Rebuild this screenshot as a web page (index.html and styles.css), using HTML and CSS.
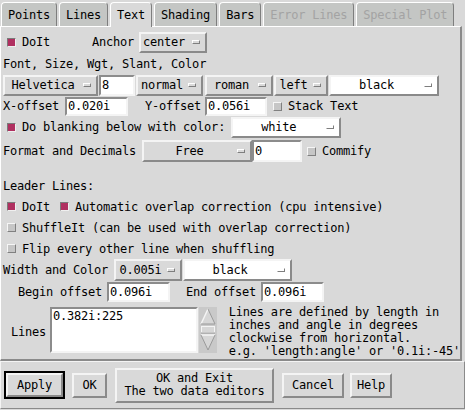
FILE: index.html
```html
<!DOCTYPE html>
<html>
<head>
<meta charset="utf-8">
<link rel="stylesheet" href="styles.css">
</head>
<body>
<div class="tabs">
  <div class="tab">Points</div>
  <div class="tab">Lines</div>
  <div class="tab active">Text</div>
  <div class="tab">Shading</div>
  <div class="tab">Bars</div>
  <div class="tab disabled">Error Lines</div>
  <div class="tab disabled">Special Plot</div>
</div>
<div class="panel">
  <div class="row r24 pl6">
    <span class="cb on"></span><span class="ml6">DoIt</span>
    <span class="ml42">Anchor</span>
    <div class="mb ml5 w68 left"><span class="mbt">center</span><span class="ind"></span></div>
  </div>
  <div class="row r20 pl2">Font, Size, Wgt, Slant, Color</div>
  <div class="row r22 pl2">
    <div class="mb w95"><span class="mbt c">Helvetica</span><span class="ind"></span></div>
    <div class="entry ml1 w36 h21">8</div>
    <div class="mb ml1 w67"><span class="mbt c">normal</span><span class="ind"></span></div>
    <div class="mb ml2 w68"><span class="mbt c">roman</span><span class="ind"></span></div>
    <div class="mb ml1 w54"><span class="mbt c">left</span><span class="ind"></span></div>
    <div class="mb white ml1 w110"><span class="mbt c">black</span><span class="ind"></span></div>
  </div>
  <div class="row r20 pl2">
    <span>X-offset</span>
    <div class="entry ml6 w63">0.020i</div>
    <span class="ml17">Y-offset</span>
    <div class="entry ml4 w62">0.056i</div>
    <span class="cb ml6"></span><span class="ml6">Stack Text</span>
  </div>
  <div class="row r22 pl6">
    <span class="cb on"></span><span class="ml6">Do blanking below with color:</span>
    <div class="mb white ml6 w110"><span class="mbt c">white</span><span class="ind"></span></div>
  </div>
  <div class="row r24 pl2 mt1">
    <span>Format and Decimals</span>
    <div class="mb ml6 w110 h22"><span class="mbt c">Free</span><span class="ind"></span></div>
    <div class="entry w50 h22">0</div>
    <span class="cb ml5"></span><span class="ml6">Commify</span>
  </div>
  <div class="spacer"></div>
  <div class="row r20 pl2">Leader Lines:</div>
  <div class="row r21 pl6">
    <span class="cb on"></span><span class="ml6">DoIt</span>
    <span class="cb on ml10"></span><span class="ml6">Automatic overlap correction (cpu intensive)</span>
  </div>
  <div class="row r21 pl6">
    <span class="cb"></span><span class="ml6">ShuffleIt (can be used with overlap correction)</span>
  </div>
  <div class="row r21 pl6">
    <span class="cb"></span><span class="ml6">Flip every other line when shuffling</span>
  </div>
  <div class="row r22 pl2">
    <span>Width and Color</span>
    <div class="mb ml6 w68 h22"><span class="mbt c">0.005i</span><span class="ind"></span></div>
    <div class="mb white ml1 w109 h22"><span class="mbt c">black</span><span class="ind"></span></div>
  </div>
  <div class="row r21 pl17">
    <span>Begin offset</span>
    <div class="entry ml5 w63 h20">0.096i</div>
    <span class="ml16">End offset</span>
    <div class="entry ml5 w63 h20">0.096i</div>
  </div>
  <div class="lines-row">
    <span class="lines-label">Lines</span>
    <div class="textarea">0.382i:225</div>
    <div class="sbar">
      <svg width="18" height="46" viewBox="0 0 18 46">
        <rect x="0" y="0" width="18" height="46" fill="#c9c9c9"/>
        <polygon points="9,2 16,17 2,17" fill="#d6d6d6"/>
        <polyline points="2,17 9,2" stroke="#f4f4f4" stroke-width="1.5" fill="none"/>
        <polyline points="9,2 16,17 2,17" stroke="#9a9a9a" stroke-width="1" fill="none"/>
        <rect x="2.5" y="19.5" width="13" height="6" fill="#d6d6d6" stroke="#f4f4f4"/>
        <line x1="2" y1="26" x2="16" y2="26" stroke="#9a9a9a"/>
        <polygon points="2,28 16,28 9,43" fill="#d6d6d6"/>
        <polyline points="2,28 16,28" stroke="#f4f4f4" stroke-width="1.5" fill="none"/>
        <polyline points="2,28 9,43 16,28" stroke="#9a9a9a" stroke-width="1" fill="none"/>
      </svg>
    </div>
    <div class="help">Lines are defined by length in<br>inches and angle in degrees<br>clockwise from horizontal.<br>e.g. 'length:angle' or '0.1i:-45'</div>
  </div>
</div>
<div class="bottom">
  <div class="defring"><div class="btn w57 h24">Apply</div></div>
  <div class="btn ml7 w35 h25">OK</div>
  <div class="btn two ml8 w159 h35">OK and Exit<br>The two data editors</div>
  <div class="btn ml8 w62 h25">Cancel</div>
  <div class="btn ml6 w42 h25">Help</div>
</div>
</body>
</html>
```
FILE: styles.css
```css
* { box-sizing: border-box; }
html, body { margin: 0; padding: 0; }
body {
  width: 465px;
  height: 410px;
  overflow: hidden;
  background: #d9d9d9;
  color: #000;
  font-family: "DejaVu Sans Mono", "Liberation Mono", monospace;
  font-size: 12px;
  letter-spacing: -0.22px;
  white-space: nowrap;
}
.tabs {
  height: 26px;
  display: flex;
  align-items: flex-end;
  padding-left: 1px;
  position: relative;
  z-index: 2;
}
.tab {
  height: 24px;
  padding: 0 6px;
  margin-right: 2px;
  background: #c4c6c4;
  border-top: 1px solid #ffffff;
  border-left: 1px solid #ffffff;
  border-right: 1px solid #7e7e7e;
  border-radius: 4px 4px 0 0;
  display: flex;
  align-items: center;
}
.tab.active {
  background: #d9d9d9;
  height: 25px;
  margin-bottom: -1px;
}
.tab.disabled { color: #a3a3a3; }
.panel {
  width: 462px;
  height: 335px;
  border-top: 1px solid #ffffff;
  border-left: 1px solid #ffffff;
  border-right: 2px solid #8a8a8a;
  border-bottom: 2px solid #8a8a8a;
  padding-top: 3px;
}
.row { display: flex; align-items: center; }
.r18 { height: 18px; }
.r20 { height: 20px; }
.r21 { height: 21px; }
.r22 { height: 22px; }
.r24 { height: 24px; }
.mt1 { margin-top: 1px; }
.spacer { height: 13px; }
.pl2 { padding-left: 2px; }
.pl6 { padding-left: 6px; }
.pl17 { padding-left: 17px; }
.ml1 { margin-left: 1px; }
.ml2 { margin-left: 2px; }
.ml4 { margin-left: 4px; }
.ml5 { margin-left: 5px; }
.ml6 { margin-left: 6px; }
.ml7 { margin-left: 7px; }
.ml8 { margin-left: 8px; }
.ml10 { margin-left: 10px; }
.ml16 { margin-left: 16px; }
.ml17 { margin-left: 17px; }
.ml42 { margin-left: 42px; }
.w35 { width: 35px; }
.w36 { width: 36px; }
.w42 { width: 42px; }
.w50 { width: 50px; }
.w54 { width: 54px; }
.w57 { width: 57px; }
.w62 { width: 62px; }
.w63 { width: 63px; }
.w67 { width: 67px; }
.w68 { width: 68px; }
.w95 { width: 95px; }
.w109 { width: 109px; }
.w110 { width: 110px; }
.w159 { width: 159px; }
.h20 { height: 20px !important; }
.h21 { height: 21px !important; }
.h22 { height: 22px !important; }
.h24 { height: 24px; }
.h25 { height: 25px; }
.h35 { height: 35px; }

.cb {
  display: inline-block;
  width: 9px;
  height: 9px;
  flex: none;
  background: #c6c6c6;
  border: 1px solid;
  border-color: #f6f6f6 #808080 #808080 #f6f6f6;
}
.cb.on {
  background: #b03060;
  border-color: #7a7a7a #efefef #efefef #7a7a7a;
}
.mb {
  height: 21px;
  display: flex;
  align-items: center;
  background: #d9d9d9;
  border: 2px solid;
  border-color: #f4f4f4 #8a8a8a #8a8a8a #f4f4f4;
  padding: 0 5px 0 2px;
  flex: none;
}
.mb.white { background: #ffffff; }
.mbt { flex: 1; }
.mbt.c { text-align: center; }
.mb.left .mbt { text-align: left; }
.ind {
  width: 8px;
  height: 4px;
  flex: none;
  border-top: 1px solid #ffffff;
  border-left: 1px solid #ffffff;
  border-right: 1px solid #7e7e7e;
  border-bottom: 1px solid #7e7e7e;
  margin-left: 4px;
}
.entry {
  height: 19px;
  display: flex;
  align-items: center;
  background: #ffffff;
  border: 2px solid;
  border-color: #8c8c8c #f4f4f4 #f4f4f4 #8c8c8c;
  padding-left: 1px;
  flex: none;
}
.lines-row {
  display: flex;
  align-items: flex-start;
  padding-left: 10px;
  margin-top: 5px;
}
.lines-label { margin-top: 18px; }
.textarea {
  margin-left: 4px;
  width: 148px;
  height: 46px;
  background: #ffffff;
  border: 2px solid;
  border-color: #8c8c8c #f4f4f4 #f4f4f4 #8c8c8c;
  padding: 0 1px;
  line-height: 14px;
}
.sbar { margin-left: 1px; width: 18px; height: 46px; }
.sbar svg { display: block; }
.help {
  margin-left: 12px;
  margin-top: -1px;
  line-height: 13px;
}
.bottom {
  height: 48px;
  width: 465px;
  display: flex;
  align-items: center;
  border-top: 1px solid #f4f4f4;
  border-left: 1px solid #f4f4f4;
  border-right: 1px solid #8a8a8a;
  border-bottom: 1px solid #8a8a8a;
  padding-left: 3px;
}
.defring {
  border: 2px solid #000;
  padding: 0;
  height: 28px;
  width: 61px;
  display: flex;
  align-items: center;
  justify-content: center;
}
.btn {
  display: flex;
  align-items: center;
  justify-content: center;
  text-align: center;
  background: #d9d9d9;
  border: 2px solid;
  border-color: #f4f4f4 #8a8a8a #8a8a8a #f4f4f4;
  flex: none;
}
.btn.two { line-height: 13px; }
```
